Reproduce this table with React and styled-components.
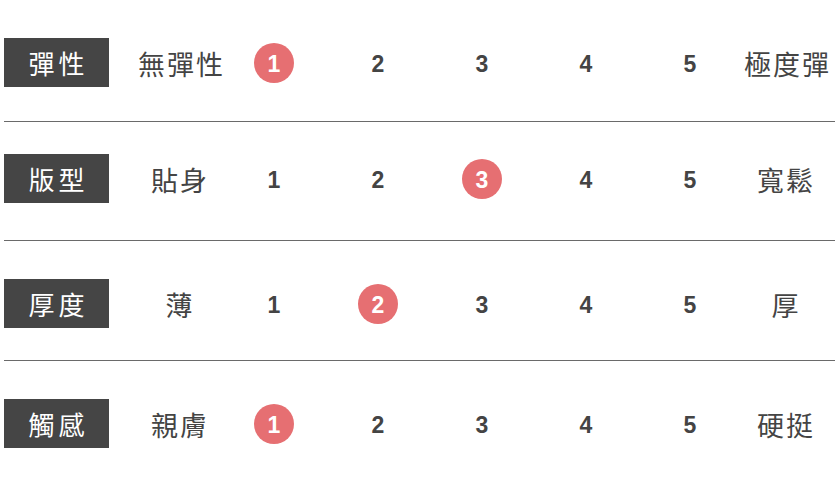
import React from "react";
import styled, { createGlobalStyle } from "styled-components";

const Global = createGlobalStyle`
  html, body { margin: 0; padding: 0; background: #fff; }
  body { font-family: "Noto Sans CJK TC", "Noto Sans", sans-serif; }
`;

const Table = styled.div`
  width: 831px;
  margin-left: 4px;
  display: flex;
  flex-direction: column;
`;

const Row = styled.div`
  display: grid;
  grid-template-columns: 132px 86px repeat(5, 104px) 86px;
  align-items: center;
  padding-top: ${(p) => p.$pt}px;
  padding-bottom: ${(p) => p.$pb}px;
  border-bottom: ${(p) => (p.$last ? "none" : "1px solid #6a6a6a")};
`;

const Label = styled.div`
  justify-self: start;
  width: 105px;
  height: 49px;
  background: #454545;
  color: #fff;
  display: flex;
  align-items: center;
  justify-content: center;
  font-family: "Noto Sans CJK TC", sans-serif;
  font-size: 26px;
  letter-spacing: 4px;
  padding-left: 4px;
  box-sizing: border-box;
  line-height: 1;
`;

const Desc = styled.div`
  text-align: center;
  font-family: "Noto Sans CJK TC", sans-serif;
  font-size: 27px;
  letter-spacing: 2px;
  color: #444;
  line-height: 1;
  white-space: nowrap;
  padding-left: 2px;
  padding-top: 2px;
`;

const Cell = styled.div`
  display: flex;
  justify-content: center;
  align-items: center;
  height: 40px;
`;

const Num = styled.span`
  width: 40px;
  height: 40px;
  border-radius: 50%;
  display: flex;
  align-items: center;
  justify-content: center;
  font-family: "Liberation Sans", Arial, sans-serif;
  font-weight: 700;
  font-size: 23px;
  line-height: 1;
  padding-top: 3px;
  box-sizing: border-box;
  color: ${(p) => (p.$active ? "#fff" : "#444")};
  background: ${(p) => (p.$active ? "#e66f72" : "transparent")};
`;

const rows = [
  { label: "彈性", lo: "無彈性", hi: "極度彈", v: 1, pt: 38, pb: 34 },
  { label: "版型", lo: "貼身", hi: "寬鬆", v: 3, pt: 32, pb: 37 },
  { label: "厚度", lo: "薄", hi: "厚", v: 2, pt: 38, pb: 32 },
  { label: "觸感", lo: "親膚", hi: "硬挺", v: 1, pt: 38, pb: 0 },
];

export default function App() {
  return (
    <>
      <Global />
      <Table>
        {rows.map((r, i) => (
          <Row key={r.label} $pt={r.pt} $pb={r.pb} $last={i === rows.length - 1}>
            <Label>{r.label}</Label>
            <Desc>{r.lo}</Desc>
            {[1, 2, 3, 4, 5].map((n) => (
              <Cell key={n}>
                <Num $active={n === r.v}>{n}</Num>
              </Cell>
            ))}
            <Desc>{r.hi}</Desc>
          </Row>
        ))}
      </Table>
    </>
  );
}
